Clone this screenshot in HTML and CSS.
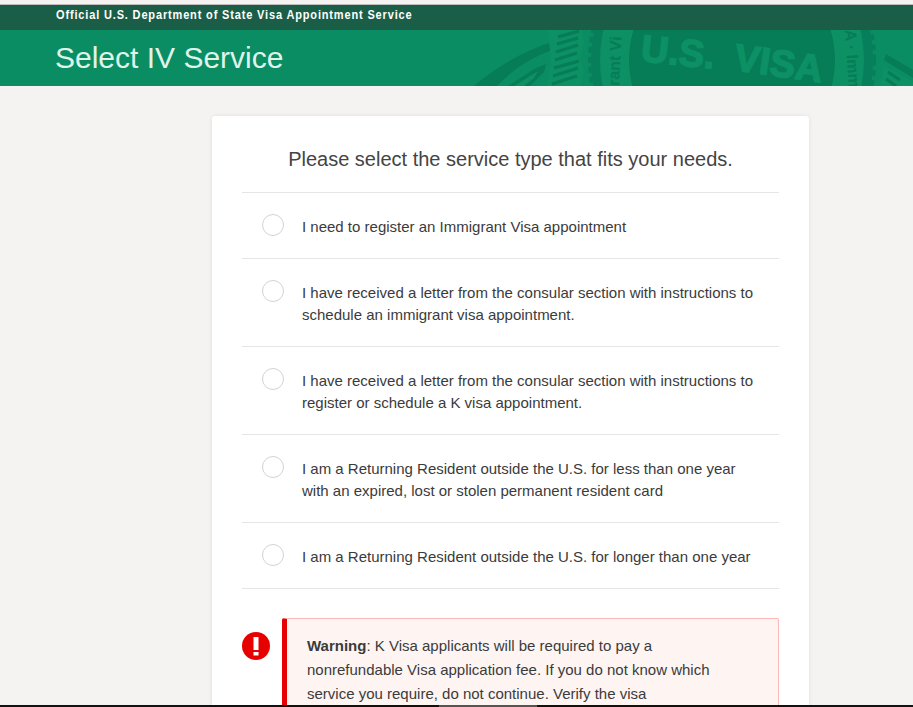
FILE: index.html
```html
<!DOCTYPE html>
<html lang="en">
<head>
    <meta charset="UTF-8">
    <meta name="viewport" content="width=device-width, initial-scale=1.0">
    <title>Select IV Service</title>
    <link rel="stylesheet" href="styles.css">
</head>
<body>
    <div class="top-strip"></div>
    <div class="official-bar"><span class="official-text">Official U.S. Department of State Visa Appointment Service</span></div>
    <header class="page-header">
        <svg class="seal" width="913" height="56" viewBox="0 30 913 56" aria-hidden="true">
            <!-- left wing -->
            <path class="seal-dark" d="M474 86 C495 68 522 52 549 43 L552 50 C530 58 512 70 497 86 Z"/>
            <path class="seal-dark" d="M508 86 L536 68 L546 64 L544 72 L530 86 Z"/>
            <path class="seal-light" d="M514 86 L538 71 L534 78 L524 86 Z"/>
            <path class="seal-light" d="M548 30 L582 30 L584 42 L580 58 L584 72 L580 86 L547 86 L551 60 Z"/>
            <g class="seal-stripe">
                <path d="M558 37 L579 31"/>
                <path d="M557 44 L578 38"/>
                <path d="M556 52 L578 45"/>
                <path d="M555 60 L577 53"/>
                <path d="M554 68 L579 61"/>
                <path d="M553 76 L578 68"/>
                <path d="M552 84 L577 76"/>
            </g>
            <!-- right wing -->
            <path class="seal-dark" d="M886 54 L913 70 L913 78 L884 60 Z"/>
            <path class="seal-light" d="M884 66 L913 82 L913 86 L880 86 Z"/>
            <g class="seal-stripe">
                <path d="M888 72 L900 80"/>
                <path d="M886 79 L896 86"/>
            </g>
            <!-- rings -->
            <circle class="seal-scallop" cx="732" cy="60" r="141"/>
            <circle class="seal-light" cx="732" cy="60" r="132"/>
            <circle class="seal-disc" cx="732" cy="60" r="103"/>
            <g class="seal-text">
                <text class="seal-ring-text" transform="translate(619 86) rotate(-87)">rant Vi</text>
                <text class="seal-ring-text" transform="translate(845 30) rotate(86)">A · Imm</text>
                <text class="seal-us" transform="translate(640 61) rotate(6)">U.S.</text>
                <text class="seal-visa" transform="translate(733 70) rotate(8)">VISA</text>
            </g>
        </svg>
        <h1 class="page-title">Select IV Service</h1>
    </header>

    <main class="card">
        <h2 class="card-title">Please select the service type that fits your needs.</h2>
        <div class="option-list">
            <label class="option">
                <span class="radio"></span>
                <span class="option-text">I need to register an Immigrant Visa appointment</span>
            </label>
            <label class="option">
                <span class="radio"></span>
                <span class="option-text">I have received a letter from the consular section with instructions to schedule an immigrant visa appointment.</span>
            </label>
            <label class="option">
                <span class="radio"></span>
                <span class="option-text">I have received a letter from the consular section with instructions to register or schedule a K visa appointment.</span>
            </label>
            <label class="option">
                <span class="radio"></span>
                <span class="option-text">I am a Returning Resident outside the U.S. for less than one year with an expired, lost or stolen permanent resident card</span>
            </label>
            <label class="option">
                <span class="radio"></span>
                <span class="option-text">I am a Returning Resident outside the U.S. for longer than one year</span>
            </label>
        </div>

        <div class="warning-row">
            <svg class="warning-icon" width="28" height="28" viewBox="0 0 28 28" aria-hidden="true">
                <circle cx="14" cy="14" r="14" fill="#e60000"/>
                <rect x="11.5" y="5" width="5" height="13" fill="#fff"/>
                <rect x="11.5" y="20" width="5" height="3.5" fill="#fff"/>
            </svg>
            <div class="warning-box">
                <strong>Warning</strong>: K Visa applicants will be required to pay a nonrefundable Visa application fee. If you do not know which service you require, do not continue. Verify the visa
            </div>
        </div>
    </main>

    <div class="bottom-bar"><span class="bottom-bar-thumb"></span></div>
</body>
</html>
```

FILE: styles.css
```css
/* Page frame */
html, body {
    height: 707px;
    overflow: hidden;
}

body {
    margin: 0;
    background: #f4f3f1;
    color: #3b3b3b;
    font-family: "Liberation Sans", Arial, sans-serif;
    font-size: 15px;
    position: relative;
}

.top-strip {
    height: 4px;
    background: #f4f3f1;
    border-bottom: 1px solid #bdbdbd;
}

.official-bar {
    height: 25px;
    line-height: 20px;
    padding-left: 56px;
    background: #1b5e48;
    color: #fff;
    font-size: 13px;
    font-weight: bold;
    letter-spacing: 1px;
}

/* no narrow face installed, so squeeze the normal bold */
.official-text {
    display: inline-block;
    transform: scaleX(0.846);
    transform-origin: left center;
    white-space: nowrap;
}

/* Green title band */
.page-header {
    position: relative;
    height: 56px;
    overflow: hidden;
    background: #0a8d62;
}

.page-title {
    position: relative;
    margin: 0;
    padding-left: 55px;
    color: #dff3ea;
    font-size: 30px;
    font-weight: normal;
    line-height: 56px;
}

.seal {
    position: absolute;
    top: 0;
    left: 0;
}

.seal-dark { fill: #067c57; }
.seal-light { fill: #0c9064; }
.seal-disc { fill: #067c57; }

.seal-scallop {
    fill: #077f5a;
    stroke: #077f5a;
    stroke-width: 6;
    stroke-dasharray: 6 4;
}

.seal-stripe path {
    fill: none;
    stroke: #067c57;
    stroke-width: 3;
}

.seal-text text {
    fill: #0c9064;
    stroke: #0c9064;
    stroke-width: 1.6;
    font-family: "Liberation Sans", Arial, sans-serif;
    font-weight: bold;
}

.seal-text .seal-ring-text {
    fill: #067c57;
    stroke: none;
    font-size: 16px;
}

.seal-us,
.seal-visa {
    font-size: 38px;
}

/* Card */
.card {
    width: 537px;
    margin: 30px 0 0 212px;
    padding: 0 30px;
    background: #fff;
    border-radius: 3px;
    box-shadow: 0 0 4px rgba(0, 0, 0, 0.08);
}

.card-title {
    margin: 0;
    padding: 31px 0 21px;
    border-bottom: 1px solid #e6e6e6;
    color: #444;
    font-size: 20px;
    font-weight: normal;
    line-height: 24px;
    text-align: center;
}

.option {
    display: flex;
    align-items: flex-start;
    gap: 18px;
    padding: 23px 20px 20px;
    border-bottom: 1px solid #e6e6e6;
}

.radio {
    flex: none;
    box-sizing: border-box;
    width: 22px;
    height: 22px;
    margin-top: -2px;
    border: 1px solid #d3d3cf;
    border-radius: 50%;
    background: #fff;
}

.option-text {
    line-height: 22px;
}

/* Warning */
.warning-row {
    display: flex;
    align-items: flex-start;
    gap: 12px;
    margin-top: 29px;
}

.warning-icon {
    flex: none;
    margin-top: 14px;
}

.warning-box {
    flex: 1;
    padding: 15px 45px 40px 20px;
    border: 1px solid #ffb6b6;
    border-left: 5px solid #e60000;
    border-radius: 2px;
    background: #fef5f3;
    line-height: 24px;
}

.warning-box strong {
    font-weight: bold;
}

/* Window edge along the bottom */
.bottom-bar {
    position: absolute;
    left: 0;
    right: 0;
    bottom: 0;
    height: 2px;
    background: #111;
}

.bottom-bar-thumb {
    display: block;
    width: 98px;
    height: 2px;
    margin-left: 439px;
    background: #555;
}
```
